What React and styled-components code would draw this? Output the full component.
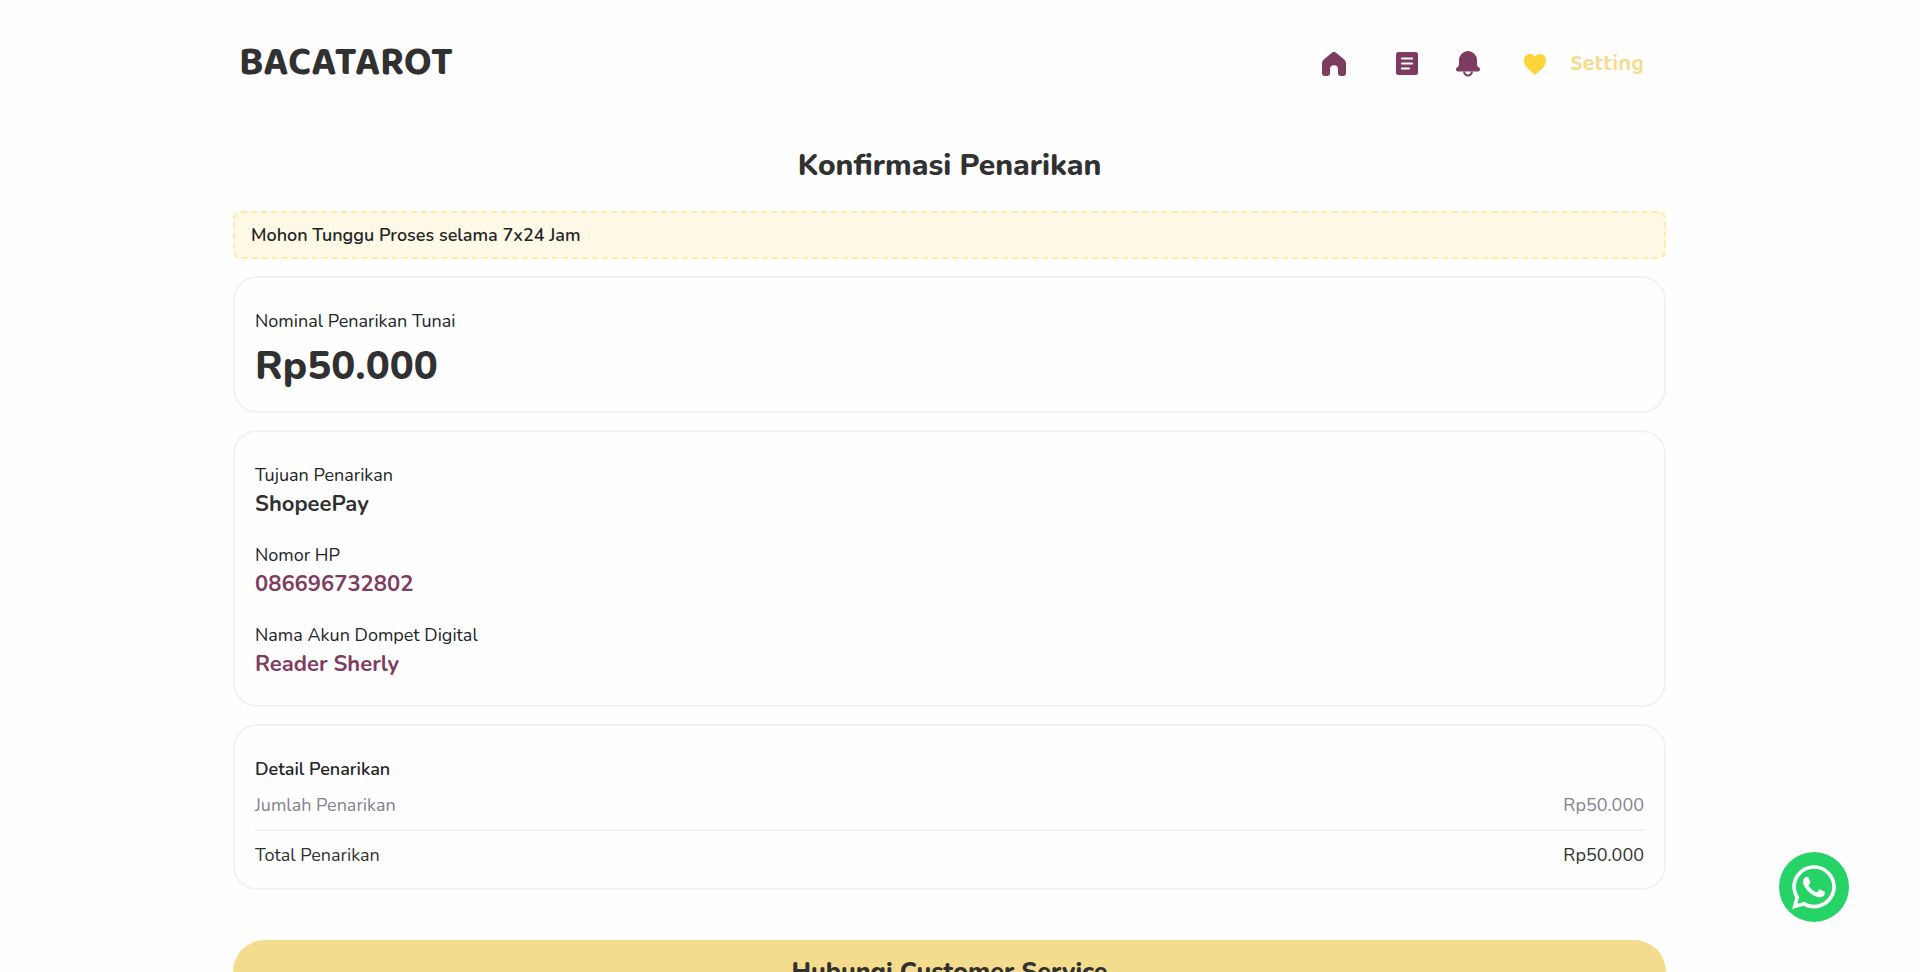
import React from 'react';
import styled, { createGlobalStyle } from 'styled-components';
import { FaWhatsapp } from 'react-icons/fa';

const GlobalStyle = createGlobalStyle`
  *, *::before, *::after { box-sizing: border-box; }
  body {
    margin: 0;
    background: #fefefe;
    color: #212529;
    font-family: Nunito, Lato, 'Open Sans', sans-serif;
    font-size: 18px;
    line-height: 27px;
  }
  h1, h2, p, dl, dt, dd { margin: 0; }
`;

const Page = styled.div`
  padding: 32px 41px 40px 20px;
`;

const Container = styled.div`
  width: 100%;
  max-width: 1433px;
  margin: 0 auto;
`;

const Header = styled.header`
  display: flex;
  align-items: center;
  justify-content: space-between;
  height: 62px;
  padding: 0 22px 0 6px;
`;

const Logo = styled.a`
  color: #313131;
  font: 700 40px/48px 'Baloo 2', 'Noto Sans', sans-serif;
  text-decoration: none;
`;

const Nav = styled.nav`
  display: flex;
  align-items: center;
  padding-top: 2px;
`;

const IconGroup = styled.div`
  display: flex;
  align-items: center;
  gap: ${(p) => p.$gap}px;
`;

const IconLink = styled.a`
  display: flex;
  color: #7d3c60;
  svg { display: block; }
`;

const SettingLink = styled.a`
  display: flex;
  align-items: center;
  gap: 24px;
  color: #f4dc8e;
  font: 600 23px/30px 'Baloo 2', Lato, sans-serif;
  text-decoration: none;
  svg { display: block; }
`;

const Title = styled.h1`
  margin: 52px 0 25px;
  color: #313131;
  font-size: 30px;
  font-weight: 800;
  line-height: 40px;
  text-align: center;
`;

const Stack = styled.main`
  display: flex;
  flex-direction: column;
  gap: 17px;
`;

const Notice = styled.p`
  padding: 9px 16px 8px;
  border: 2px dashed #ffeba4;
  border-radius: 8px;
  background: #fff9e5;
  font-weight: 600;
`;

const Card = styled.section`
  padding: 30px 20px ${(p) => p.$bottom}px;
  border: 2px solid #f2f2f2;
  border-radius: 24px;
`;

const Amount = styled.p`
  margin-top: 7px;
  padding-bottom: 1px;
  color: #313131;
  font-size: 40px;
  font-weight: 800;
  line-height: 48px;
`;

const Fields = styled.dl`
  display: flex;
  flex-direction: column;
  gap: 23px;
`;

const FieldValue = styled.dd`
  color: ${(p) => (p.$accent ? '#7d3c60' : '#313131')};
  font-size: 22px;
  font-weight: 700;
  line-height: 30px;
`;

const DetailTitle = styled.h2`
  margin-bottom: 9px;
  font-size: 18px;
  font-weight: 600;
`;

const DetailTable = styled.table`
  width: 100%;
  border-collapse: separate;
  border-spacing: 0;
`;

const DetailRow = styled.tr`
  color: ${(p) => (p.$total ? '#313131' : '#84818f')};
  th, td {
    padding: ${(p) => (p.$total ? '11px 0 0' : '0 0 10px')};
    border-bottom: ${(p) => (p.$total ? '0' : '2px solid #f2f2f2')};
    font-weight: 400;
    text-align: left;
  }
  td { text-align: right; }
`;

const ContactButton = styled.button`
  width: 100%;
  height: 64px;
  margin-top: 33px;
  border: 0;
  border-radius: 32px;
  background: #f4dc8e;
  color: #313131;
  font: inherit;
  font-size: 25px;
  font-weight: 800;
  cursor: pointer;
`;

const WhatsAppLink = styled.a`
  position: fixed;
  right: 71px;
  bottom: 50px;
  display: flex;
  align-items: center;
  justify-content: center;
  width: 70px;
  height: 70px;
  border-radius: 50%;
  background: #25d366;
  color: #fff;
`;

const HomeIcon = () => (
  <svg width="24" height="24" viewBox="0 0 24 24" fill="currentColor" aria-hidden="true">
    <path d="M9.6.9a3.8 3.8 0 0 1 4.8 0l7.8 6.5A5 5 0 0 1 24 11.2V21.6A2.4 2.4 0 0 1 21.6 24H18.4A2.4 2.4 0 0 1 16 21.6V17.2a4 4 0 0 0-8 0V21.6A2.4 2.4 0 0 1 5.6 24H2.4A2.4 2.4 0 0 1 0 21.6V11.2A5 5 0 0 1 1.8 7.4z" />
  </svg>
);

const OrdersIcon = () => (
  <svg width="22" height="24" viewBox="0 0 22 24" aria-hidden="true">
    <rect width="22" height="23" rx="2.5" fill="currentColor" />
    <path d="M6 6.5h10M6 11.500h10M6 16.500h7" stroke="#fefefe" strokeWidth="2.2" strokeLinecap="round" />
  </svg>
);

const BellIcon = () => (
  <svg width="24" height="26" viewBox="0 0 24 26" fill="currentColor" aria-hidden="true">
    <path d="M12 0a9 9 0 0 1 9 9v4.500c0 1 .3 1.700 1.100 2.300l.8.600A2.200 2.200 0 0 1 21.600 20.500H2.400A2.200 2.200 0 0 1 1.100 16.400l.8-.6C2.700 15.200 3 14.500 3 13.500V9a9 9 0 0 1 9-9z" />
    <path d="M8.200 20.500a3.800 4 0 0 0 7.600 0" fill="none" stroke="currentColor" strokeWidth="2.2" />
  </svg>
);

const HeartIcon = () => (
  <svg width="22" height="21" viewBox="0 0 22 21" fill="#ffd43b" aria-hidden="true">
    <path d="M11 21C9.400 19.500 6 16.900 3.500 14.300 1.200 11.900 0 9.500 0 6.600 0 2.700 2.600 0 6 0c2.100 0 3.900 1 5 2.700C12.100 1 13.900 0 16 0c3.400 0 6 2.700 6 6.600 0 2.900-1.200 5.300-3.500 7.700C16 16.900 12.600 19.500 11 21z" />
  </svg>
);

const fields = [
  { label: 'Tujuan Penarikan', value: 'ShopeePay' },
  { label: 'Nomor HP', value: '086696732802', accent: true },
  { label: 'Nama Akun Dompet Digital', value: 'Reader Sherly', accent: true },
];

export default function App() {
  return (
    <>
      <GlobalStyle />
      <Page>
        <Container>
          <Header>
            <Logo href="#">BACATAROT</Logo>
            <Nav>
              <IconGroup $gap={50}>
                <IconLink href="#home" aria-label="Beranda"><HomeIcon /></IconLink>
                <IconGroup $gap={38}>
                  <IconLink href="#orders" aria-label="Pesanan"><OrdersIcon /></IconLink>
                  <IconGroup $gap={44}>
                    <IconLink href="#notifications" aria-label="Notifikasi"><BellIcon /></IconLink>
                    <SettingLink href="#setting"><HeartIcon />Setting</SettingLink>
                  </IconGroup>
                </IconGroup>
              </IconGroup>
            </Nav>
          </Header>
          <Title>Konfirmasi Penarikan</Title>
          <Stack>
            <Notice>Mohon Tunggu Proses selama 7x24 Jam</Notice>
            <Card $bottom={20}>
              <p>Nominal Penarikan Tunai</p>
              <Amount>Rp50.000</Amount>
            </Card>
            <Card $bottom={26}>
              <Fields>
                {fields.map((f) => (
                  <div key={f.label}>
                    <dt>{f.label}</dt>
                    <FieldValue $accent={f.accent}>{f.value}</FieldValue>
                  </div>
                ))}
              </Fields>
            </Card>
            <Card $bottom={19}>
              <DetailTitle>Detail Penarikan</DetailTitle>
              <DetailTable>
                <tbody>
                  <DetailRow><th scope="row">Jumlah Penarikan</th><td>Rp50.000</td></DetailRow>
                  <DetailRow $total><th scope="row">Total Penarikan</th><td>Rp50.000</td></DetailRow>
                </tbody>
              </DetailTable>
            </Card>
            <ContactButton type="button">Hubungi Customer Service</ContactButton>
          </Stack>
        </Container>
      </Page>
      <WhatsAppLink href="#whatsapp" aria-label="WhatsApp"><FaWhatsapp size={50} /></WhatsAppLink>
    </>
  );
}
